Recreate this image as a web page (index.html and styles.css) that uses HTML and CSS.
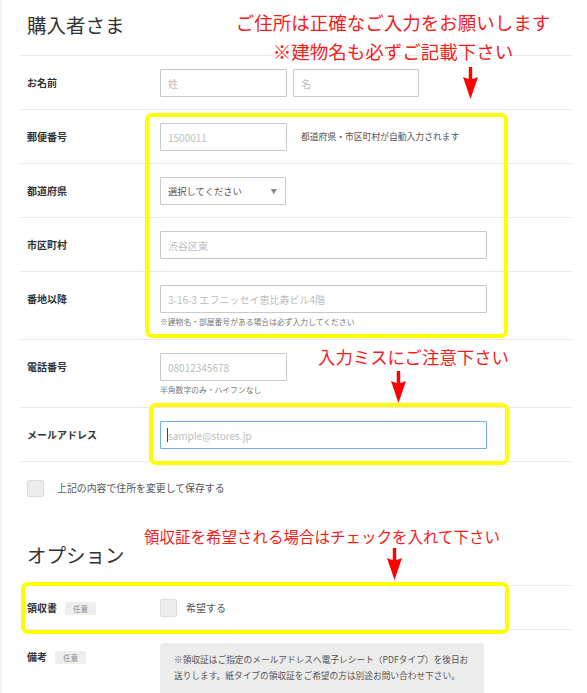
FILE: index.html
```html
<!DOCTYPE html>
<html lang="ja">
<head>
<meta charset="utf-8">
<title>購入者さま</title>
<link rel="stylesheet" href="styles.css">
</head>
<body>
<div class="page">
  <h2 class="heading">購入者さま</h2>

  <div class="row">
    <div class="label">お名前</div>
    <div class="field field-inline">
      <input class="input input-s" placeholder="姓">
      <input class="input input-s2" placeholder="名">
    </div>
  </div>

  <div class="row">
    <div class="label">郵便番号</div>
    <div class="field field-inline">
      <input class="input input-s" placeholder="1500011">
      <span class="note">都道府県・市区町村が自動入力されます</span>
    </div>
  </div>

  <div class="row">
    <div class="label">都道府県</div>
    <div class="field">
      <div class="select"><span>選択してください</span><span class="select-caret">▼</span></div>
    </div>
  </div>

  <div class="row">
    <div class="label">市区町村</div>
    <div class="field">
      <input class="input input-l" placeholder="渋谷区東">
    </div>
  </div>

  <div class="row">
    <div class="label">番地以降</div>
    <div class="field">
      <input class="input input-l" placeholder="3-16-3 エフニッセイ恵比寿ビル4階">
      <div class="help">※建物名・部屋番号がある場合は必ず入力してください</div>
    </div>
  </div>

  <div class="row">
    <div class="label">電話番号</div>
    <div class="field">
      <input class="input input-s" placeholder="08012345678">
      <div class="help">半角数字のみ・ハイフンなし</div>
    </div>
  </div>

  <div class="row">
    <div class="label">メールアドレス</div>
    <div class="field">
      <div class="input-wrap">
        <input class="input input-l input-focus" placeholder="sample@stores.jp">
        <span class="text-caret"></span>
      </div>
    </div>
  </div>

  <div class="save">
    <span class="checkbox"></span>
    <span class="save-text">上記の内容で住所を変更して保存する</span>
  </div>

  <h2 class="heading heading-opt">オプション</h2>

  <div class="row row-opt">
    <div class="label label-badge">領収書<span class="badge">任意</span></div>
    <div class="field field-inline">
      <span class="checkbox checkbox-m"></span>
      <span class="check-text">希望する</span>
    </div>
  </div>

  <div class="row row-last">
    <div class="label label-badge label-tall">備考<span class="badge">任意</span></div>
    <div class="field">
      <div class="remarks">※領収証はご指定のメールアドレスへ電子レシート（PDFタイプ）を後日お<br>送りします。紙タイプの領収証をご希望の方は別途お問い合わせ下さい。</div>
    </div>
  </div>
</div>

<div class="note-red note-red-1">ご住所は正確なご入力をお願いします<br>※建物名も必ずご記載下さい</div>
<svg class="arrow arrow-1" viewBox="0 0 15 32" width="15" height="32"><rect x="5.8" y="0" width="3.4" height="15" fill="#f00"/><path d="M0 10 Q7.5 14 15 10 L7.5 32 Z" fill="#f00"/></svg>
<div class="hl hl-1"></div>

<div class="note-red note-red-2">入力ミスにご注意下さい</div>
<svg class="arrow arrow-2" viewBox="0 0 15 32" width="15" height="32"><rect x="5.8" y="0" width="3.4" height="15" fill="#f00"/><path d="M0 10 Q7.5 14 15 10 L7.5 32 Z" fill="#f00"/></svg>
<div class="hl hl-2"></div>

<div class="note-red note-red-3">領収証を希望される場合はチェックを入れて下さい</div>
<svg class="arrow arrow-3" viewBox="0 0 15 32" width="15" height="32"><rect x="5.8" y="0" width="3.4" height="15" fill="#f00"/><path d="M0 10 Q7.5 14 15 10 L7.5 32 Z" fill="#f00"/></svg>
<div class="hl hl-3"></div>
</body>
</html>
```

FILE: styles.css
```css
* { box-sizing: border-box; }

html, body {
  margin: 0;
  padding: 0;
  background: #fff;
  height: 100%;
  overflow: hidden;
}

body {
  position: relative;
  font-family: "Noto Sans CJK JP", "Noto Sans", sans-serif;
  color: #333;
  border-left: 2px solid #f2f2f2;
}

.page {
  margin-left: 19px;
  width: 550px;
}

.heading {
  margin: 0;
  padding: 11px 0 16px 6px;
  font-size: 19.5px;
  line-height: 28px;
  font-weight: 400;
  color: #333;
  border-bottom: 1px solid #e9e9e9;
}

.heading-opt {
  margin-top: 33px;
}

.row {
  display: flex;
  align-items: flex-start;
  padding: 13px 0 12px;
  border-bottom: 1px solid #e9e9e9;
}

.row-last {
  border-bottom: none;
}

.label {
  width: 139px;
  flex: none;
  padding-left: 6px;
  font-size: 10px;
  font-weight: 700;
  line-height: 28px;
  color: #333;
}

.label-badge {
  display: flex;
  align-items: center;
  line-height: 16px;
  height: 18px;
}

.label-tall {
  height: 28px;
}

.badge {
  display: inline-block;
  margin-left: 8px;
  padding: 0 8px;
  height: 13px;
  line-height: 13px;
  font-size: 7.5px;
  font-weight: 400;
  color: #888;
  background: #eeeeee;
  border-radius: 2px;
}

.field {
  display: flex;
  flex-direction: column;
  align-items: flex-start;
}

.field-inline {
  flex-direction: row;
  align-items: center;
}

.input {
  display: block;
  height: 28px;
  margin: 0;
  padding: 0 7px;
  border: 1px solid #c9c9c9;
  border-radius: 1px;
  background: #fff;
  font-family: "Noto Sans CJK JP", "Noto Sans", sans-serif;
  font-size: 10px;
  color: #333;
  outline: none;
}

.input::placeholder {
  color: #bdbdbd;
}

.input-s { width: 127px; }
.input-s2 { width: 126px; margin-left: 6px; }
.input-l { width: 327px; }

.input-focus {
  border-color: #73aee8;
}

.input-wrap {
  position: relative;
}

.text-caret {
  position: absolute;
  left: 7px;
  top: 7px;
  width: 1px;
  height: 14px;
  background: #444;
}

.note {
  margin-left: 14px;
  font-size: 8.8px;
  color: #555;
  line-height: 28px;
}

.select {
  width: 126px;
  height: 28px;
  padding: 0 8px 0 7px;
  border: 1px solid #c9c9c9;
  border-radius: 1px;
  display: flex;
  align-items: center;
  justify-content: space-between;
  font-size: 9.3px;
  color: #555;
}

.select-caret {
  font-size: 6.5px;
  color: #888;
}

.help {
  margin-top: 3px;
  font-size: 7.8px;
  line-height: 11px;
  color: #777;
}

.save {
  display: flex;
  align-items: center;
  margin-top: 18px;
  padding-left: 6px;
}

.checkbox {
  display: inline-block;
  width: 17px;
  height: 17px;
  background: #ececec;
  border: 1px solid #dcdcdc;
  border-radius: 2px;
  flex: none;
}

.checkbox-m {
  height: 18px;
}

.save-text {
  margin-left: 13px;
  font-size: 9.9px;
  color: #555;
  line-height: 17px;
}

.check-text {
  margin-left: 9px;
  font-size: 10px;
  color: #555;
  line-height: 18px;
}

.remarks {
  width: 324px;
  padding: 9px 14px 12px;
  background: #ececec;
  border-radius: 3px;
  font-size: 8.7px;
  line-height: 16px;
  color: #555;
  white-space: nowrap;
}

/* annotation overlays */
.note-red {
  position: absolute;
  color: #f51c1c;
  font-family: "Noto Sans CJK JP", sans-serif;
  white-space: nowrap;
}

.note-red-1 {
  left: 231px;
  top: 8px;
  width: 320px;
  text-align: center;
  font-size: 18.5px;
  line-height: 29px;
}

.note-red-2 {
  left: 316px;
  top: 345px;
  font-size: 17.4px;
  line-height: 24px;
}

.note-red-3 {
  left: 142px;
  top: 525px;
  font-size: 15.5px;
  line-height: 22px;
}

.arrow {
  position: absolute;
}

.arrow-1 { left: 461px; top: 67px; }
.arrow-2 { left: 389px; top: 371px; }
.arrow-3 { left: 385px; top: 548px; }

.hl {
  position: absolute;
  border: 4px solid #ffff00;
  border-radius: 7px;
}

.hl-1 { left: 143px; top: 113px; width: 363px; height: 225px; }
.hl-2 { left: 147px; top: 403px; width: 360px; height: 62px; }
.hl-3 { left: 19px; top: 582px; width: 488px; height: 52px; }
```
